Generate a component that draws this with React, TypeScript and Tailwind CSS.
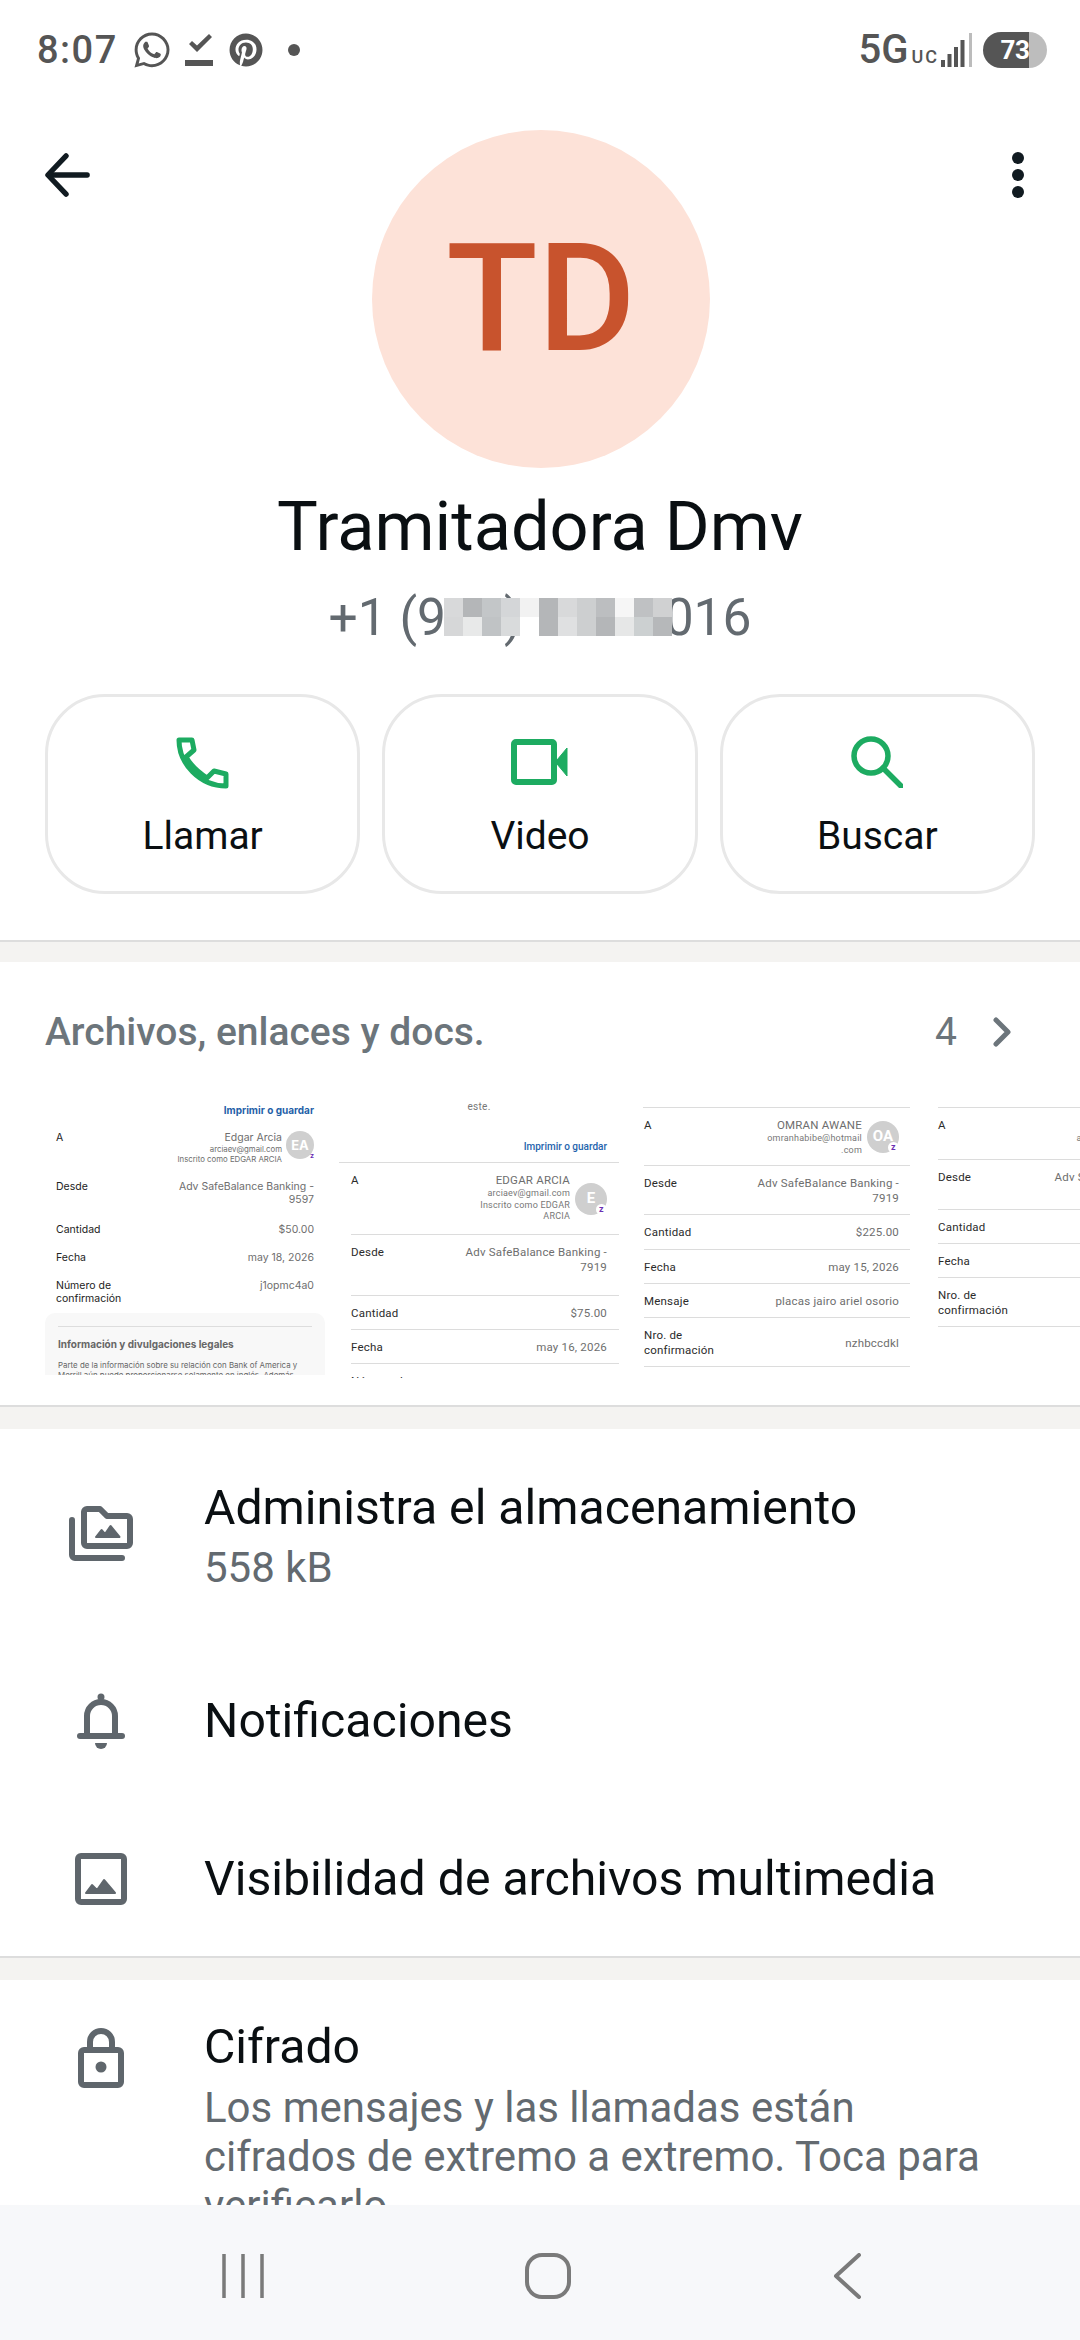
import React from 'react';
import { FaWhatsapp, FaPinterest } from 'react-icons/fa';

type Row = { label?: string; value?: string; sub?: string[]; initials?: string; h: string; valuePt?: string };

const mosaic = [
  'bg-[#d8d9da]', 'bg-[#b4b6b8]', 'bg-[#c3c6c8]', 'bg-[#d4d6d8]', 'bg-[#f2f2f2]', 'bg-[#b4b6b8]',
  'bg-[#d8d9da]', 'bg-[#cdcfd0]', 'bg-[#bcbec0]', 'bg-[#f6f6f6]', 'bg-[#bfc1c3]', 'bg-[#d0d1d2]',
  'bg-[#d6d7d8]', 'bg-[#e8e9e9]', 'bg-[#c0c3c5]', 'bg-[#d9dbdc]', 'bg-[#ffffff]', 'bg-[#b4b6b8]',
  'bg-[#dfe0e1]', 'bg-[#cdcfd0]', 'bg-[#b4b6b8]', 'bg-[#e6e7e7]', 'bg-[#ccd0d1]', 'bg-[#b6b8ba]',
];

const thumb2: Row[] = [
  { label: 'A', value: 'EDGAR ARCIA', sub: ['arciaev@gmail.com', 'Inscrito como EDGAR', 'ARCIA'], initials: 'E', h: 'h-[72px]' },
  { label: 'Desde', value: 'Adv SafeBalance Banking - 7919', h: 'h-[61px]' },
  { label: 'Cantidad', value: '$75.00', h: 'h-[34px]' },
  { label: 'Fecha', value: 'may 16, 2026', h: 'h-[34px]' },
  { label: 'Número de', value: '', h: 'h-[34px]' },
];

const thumb3: Row[] = [
  { label: 'A', value: 'OMRAN AWANE', sub: ['omranhabibe@hotmail', '.com'], initials: 'OA', h: 'h-[58px]' },
  { label: 'Desde', value: 'Adv SafeBalance Banking - 7919', h: 'h-[49px]' },
  { label: 'Cantidad', value: '$225.00', h: 'h-[35px]' },
  { label: 'Fecha', value: 'may 15, 2026', h: 'h-[34px]' },
  { label: 'Mensaje', value: 'placas jairo ariel osorio', h: 'h-[34px]' },
  { label: 'Nro. de confirmación', value: 'nzhbccdkl', h: 'h-[49px]', valuePt: 'pt-[8px]' },
];

const thumb4: Row[] = [
  { label: 'A', value: 'EDGAR ARCIA', sub: ['arciaev@gmail.com'], initials: 'E', h: 'h-[52px]' },
  { label: 'Desde', value: 'Adv SafeBalance Banking - 7919', h: 'h-[50px]' },
  { label: 'Cantidad', value: '$50.00', h: 'h-[34px]' },
  { label: 'Fecha', value: 'may 18, 2026', h: 'h-[34px]' },
  { label: 'Nro. de confirmación', value: 'j1opmc4a0', h: 'h-[49px]' },
];

const MiniAvatar: React.FC<{ initials: string }> = ({ initials }) => (
  <div className="relative -mt-[10px] ml-[5px] flex h-[32px] w-[32px] shrink-0 items-center justify-center self-center rounded-full bg-[#cfcfcf] text-[15px] font-bold text-white">
    {initials}
    <span className="absolute bottom-[0px] right-[0px] flex h-[11px] w-[11px] items-center justify-center rounded-full bg-white text-[9px] font-bold leading-none text-[#6b2fb3]">z</span>
  </div>
);

const ReceiptRow: React.FC<{ row: Row; inset: string }> = ({ row, inset }) => (
  <div className={`flex justify-between border-b border-[#dcdcdc] pt-[10px] text-[11.5px] leading-[15px] tracking-[0.2px] ${inset} ${row.h}`}>
    <div className="w-[90px] shrink-0 text-[#2b2b2b]">{row.label}</div>
    <div className={`flex min-w-0 flex-1 justify-end ${row.valuePt ?? ''}`}>
      <div className="min-w-0 text-right text-[#6e6e6e]">
        <div>{row.value}</div>
        {row.sub?.map((s) => (
          <div key={s} className="text-[9px] leading-[11.5px] text-[#777]">{s}</div>
        ))}
      </div>
      {row.initials && <MiniAvatar initials={row.initials} />}
    </div>
  </div>
);

const MiniAvatarSmall: React.FC = () => (
  <div className="relative ml-[4px] flex h-[28px] w-[28px] shrink-0 items-center justify-center rounded-full bg-[#cfcfcf] text-[13px] font-bold text-white">
    EA
    <span className="absolute bottom-[0px] right-[0px] text-[7px] font-bold leading-none text-[#6b2fb3]">z</span>
  </div>
);

const FirstReceipt: React.FC = () => (
  <div className="h-[276px] w-[280px] shrink-0 overflow-hidden font-['Inter',sans-serif] text-[10.5px] leading-[13px]">
    <div className="pr-[11px] pt-[5px] text-right text-[10px] font-bold text-[#1f5fa8]">Imprimir o guardar</div>
    <div className="flex justify-between pl-[11px] pr-[11px] pt-[14px] text-[#6e6e6e]">
      <div className="text-[#222]">A</div>
      <div className="flex">
        <div className="text-right">
          <div>Edgar Arcia</div>
          <div className="text-[7.8px] leading-[10px]">arciaev@gmail.com</div>
          <div className="text-[7.8px] leading-[10px]">Inscrito como EDGAR ARCIA</div>
        </div>
        <MiniAvatarSmall />
      </div>
    </div>
    <div className="flex justify-between pl-[11px] pr-[11px] pt-[16px] text-[#6e6e6e]">
      <div className="text-[#222]">Desde</div>
      <div className="w-[146px] text-right">Adv SafeBalance Banking - 9597</div>
    </div>
    <div className="flex justify-between pl-[11px] pr-[11px] pt-[17px] text-[#6e6e6e]">
      <div className="text-[#222]">Cantidad</div>
      <div>$50.00</div>
    </div>
    <div className="flex justify-between pl-[11px] pr-[11px] pt-[15px] text-[#6e6e6e]">
      <div className="text-[#222]">Fecha</div>
      <div>may 18, 2026</div>
    </div>
    <div className="flex justify-between pl-[11px] pr-[11px] pt-[15px] text-[#6e6e6e]">
      <div className="w-[80px] text-[#222]">Número de confirmación</div>
      <div>j1opmc4a0</div>
    </div>
    <div className="mt-[8px] h-[70px] rounded-[10px] bg-[#f8f8f8] px-[13px] pt-[13px]">
      <div className="border-t border-[#dddddd] pt-[11px] text-[10px] font-bold text-[#666]">Información y divulgaciones legales</div>
      <div className="pt-[9px] text-[7.9px] leading-[10px] text-[#666]">Parte de la información sobre su relación con Bank of America y Merrill aún puede proporcionarse solamente en inglés. Además</div>
    </div>
  </div>
);

const SecondReceipt: React.FC = () => (
  <div className="h-[279px] w-[280px] shrink-0 overflow-hidden">
    <div className="pt-[1px] text-center text-[10px] leading-[14px] tracking-[0.3px] text-[#777]">este.</div>
    <div className="pr-[12px] pt-[26px] text-right text-[10px] font-medium leading-[14px] text-[#1f64ad]">Imprimir o guardar</div>
    <div className="mt-[8px] border-t border-[#dcdcdc]" />
    {thumb2.map((r) => <ReceiptRow key={r.label} row={r} inset="ml-[12px] pr-[12px]" />)}
  </div>
);

const ThirdReceipt: React.FC = () => (
  <div className="h-[276px] w-[280px] shrink-0 overflow-hidden pt-[8px]">
    <div className="ml-[10px] mr-[3px] border-t border-[#dcdcdc]" />
    {thumb3.map((r) => <ReceiptRow key={r.label} row={r} inset="ml-[11px] mr-[3px] pr-[11px]" />)}
  </div>
);

const FourthReceipt: React.FC = () => (
  <div className="h-[276px] w-[280px] shrink-0 overflow-hidden pt-[8px]">
    <div className="ml-[11px] border-t border-[#dcdcdc]" />
    {thumb4.map((r) => <ReceiptRow key={r.label} row={r} inset="ml-[11px] pr-[11px]" />)}
  </div>
);

const StatusBar: React.FC = () => (
  <div className="flex h-[100px] items-center justify-between pl-[37px] pr-[33px] text-[#555555]">
    <div className="flex items-center">
      <span className="text-[38px] font-medium leading-none tracking-[1.5px]">8:07</span>
      <FaWhatsapp className="ml-[14px] h-[40px] w-[40px]" />
      <svg viewBox="0 0 28 34" className="ml-[13px] h-[34px] w-[28px]" fill="currentColor">
        <path d="M4 11l3-3 5 4.500L24 1l3 3L12 19z" />
        <rect x="0" y="27" width="28" height="6" />
      </svg>
      <FaPinterest className="ml-[16px] h-[34px] w-[34px]" />
      <span className="ml-[25px] h-[12px] w-[12px] rounded-full bg-[#555555]" />
    </div>
    <div className="flex items-center">
      <span className="text-[40px] font-medium leading-none">5G</span>
      <span className="ml-[3px] mt-[14px] text-[18px] font-medium leading-none tracking-[2px]">UC</span>
      <svg viewBox="0 0 32 34" className="ml-[2px] h-[34px] w-[32px]" fill="currentColor">
        <rect x="0" y="27" width="4" height="7" />
        <rect x="6.500" y="21" width="4" height="13" />
        <rect x="13" y="14" width="4" height="20" />
        <rect x="19.500" y="7" width="4" height="27" />
        <rect x="28" y="0" width="3" height="34" fill="#bcbcbc" />
      </svg>
      <div className="ml-[10px] flex h-[36px] w-[64px] items-center justify-center rounded-full bg-[linear-gradient(90deg,#555555_0%,#555555_72%,#bdbdbd_72%)] text-[26px] font-bold leading-none tracking-[-0.5px] text-white">73</div>
    </div>
  </div>
);

const ActionButton: React.FC<{ label: string; children: React.ReactNode }> = ({ label, children }) => (
  <div className="flex h-[200px] flex-1 flex-col items-center rounded-[60px] border-[3px] border-[#e8e8e8] pt-[37px]">
    <div className="flex h-[56px] items-center justify-center text-[#1dab61]">{children}</div>
    <div className="pt-[22px] text-[39px] leading-[48px] text-[#0a0f12]">{label}</div>
  </div>
);

const FolderIcon = () => (
  <svg viewBox="0 0 64 56" className="mt-[27px] h-[56px] w-[64px]" fill="none" stroke="#5f666c" strokeWidth="6" strokeLinecap="round" strokeLinejoin="round">
    <path d="M3 15v35a3 3 0 0 0 3 3h47" />
    <path d="M15 7a3 3 0 0 1 3-3h13l7 7h20a3 3 0 0 1 3 3v24a3 3 0 0 1-3 3H18a3 3 0 0 1-3-3z" />
    <path d="M27 32l5.500-7 3.500 4 5.500-8 9 11z" fill="#5f666c" stroke="#5f666c" strokeWidth="2" />
  </svg>
);

const BellIcon = () => (
  <svg viewBox="0 0 48 60" className="h-[60px] w-[48px]" fill="none" stroke="#5f666c" strokeWidth="6" strokeLinecap="round" strokeLinejoin="round">
    <path d="M10 44V25a14 14 0 0 1 28 0v19" />
    <path d="M3 45h42" />
    <circle cx="24" cy="6" r="2" fill="#5f666c" strokeWidth="3" />
    <path d="M18 52h12a6 6 0 0 1-12 0z" fill="#5f666c" stroke="none" />
  </svg>
);

const ImageIcon = () => (
  <svg viewBox="0 0 52 52" className="mt-[4px] h-[52px] w-[52px]" fill="none" stroke="#5f666c" strokeWidth="6" strokeLinejoin="round">
    <rect x="3" y="3" width="46" height="46" rx="3" />
    <path d="M11 40l6-8 5 5 7-10 11 13z" fill="#5f666c" stroke="#5f666c" strokeWidth="2" />
  </svg>
);

const LockIcon = () => (
  <svg viewBox="0 0 46 60" className="mt-[11px] h-[60px] w-[46px]" fill="none" stroke="#5f666c" strokeWidth="6" strokeLinejoin="round">
    <path d="M12 22V14a11 11 0 0 1 22 0v8" />
    <rect x="3" y="22" width="40" height="35" rx="3" />
    <circle cx="23" cy="39" r="5.500" fill="#5f666c" stroke="none" />
  </svg>
);

const ListRow: React.FC<{ icon: React.ReactNode; title: string; className: string; children?: React.ReactNode }> = ({ icon, title, className, children }) => (
  <div className={`flex ${className}`}>
    <div className="flex w-[204px] shrink-0 justify-center pr-[2px]">{icon}</div>
    <div className="min-w-0 flex-1 pr-[80px]">
      <div className="whitespace-nowrap text-[48.2px] leading-[60px] text-[#0a0f12]">{title}</div>
      {children}
    </div>
  </div>
);

const App: React.FC = () => (
  <div className="flex h-[2340px] w-[1080px] flex-col overflow-hidden bg-white font-['Roboto',sans-serif]">
    <div className="min-h-0 flex-1 overflow-hidden">
      <StatusBar />

      {/* Top bar + avatar */}
      <div className="flex items-start justify-between pl-[45px] pr-[56px] pt-[30px]">
        <div className="w-[61px] pt-[22px]">
          <svg viewBox="0 0 48 48" className="h-[46px] w-[46px]" fill="none" stroke="#111b21" strokeWidth="5.500" strokeLinecap="round" strokeLinejoin="round">
            <path d="M44 24H4" />
            <path d="M22 4L3 24l19 20" />
          </svg>
        </div>
        <div className="flex h-[338px] w-[338px] items-center justify-center rounded-full bg-[#fde2d8] text-[150px] font-medium leading-none text-[#c8532d]">TD</div>
        <div className="flex w-[48px] justify-end pt-[22px]">
          <div className="flex h-[46px] w-[12px] flex-col justify-between">
            <span className="h-[12px] w-[12px] rounded-full bg-[#111b21]" />
            <span className="h-[12px] w-[12px] rounded-full bg-[#111b21]" />
            <span className="h-[12px] w-[12px] rounded-full bg-[#111b21]" />
          </div>
        </div>
      </div>

      <div className="pt-[20px] text-center text-[68.5px] leading-[78px] text-[#0a0f12]">Tramitadora Dmv</div>
      <div className="flex justify-center pt-[22px]">
        <div className="relative text-[51.5px] leading-[60px] text-[#636a70]">
          +1 (9<span className="invisible">00</span>) <span className="invisible">000-0</span>016
          <div className="absolute left-[115px] top-[10px] grid h-[38px] w-[228px] grid-cols-12">
            {mosaic.map((c, i) => <div key={i} className={c} />)}
          </div>
        </div>
      </div>

      {/* Actions */}
      <div className="flex gap-[22px] pl-[45px] pr-[45px] pt-[46px]">
        <ActionButton label="Llamar">
          <svg viewBox="10 8 58 56" className="h-[56px] w-[58px]" fill="none" stroke="currentColor" strokeWidth="5" strokeLinejoin="round" strokeLinecap="round">
            <path d="M15 14h13l2 10-8 7C27 40 34 46 43 52l7-7 12 3v12C36 60 15 38 15 14z" />
          </svg>
        </ActionButton>
        <ActionButton label="Video">
          <svg viewBox="0 0 58 46" className="h-[46px] w-[58px]" fill="none" stroke="currentColor" strokeWidth="6" strokeLinejoin="round">
            <rect x="3" y="3" width="40" height="40" rx="2" />
            <path d="M56 9v28L46 25v-4z" fill="currentColor" strokeWidth="1" />
          </svg>
        </ActionButton>
        <ActionButton label="Buscar">
          <svg viewBox="0 0 52 52" className="h-[52px] w-[52px]" fill="none" stroke="currentColor" strokeWidth="5.500" strokeLinecap="round">
            <circle cx="20" cy="20" r="17" />
            <path d="M32 32l18 18" />
          </svg>
        </ActionButton>
      </div>

      <div className="mt-[46px] h-[22px] border-t-2 border-[#dddddd] bg-[#f4f3f1]" />

      {/* Media */}
      <div className="h-[445px] border-b-2 border-[#dddddd]">
        <div className="flex items-center justify-between pl-[45px] pr-[68px] pt-[47px]">
          <div className="text-[39px] font-medium leading-[46px] text-[#6c757b]">Archivos, enlaces y docs.</div>
          <div className="flex items-center">
            <span className="text-[39px] leading-[46px] text-[#6c757b]">4</span>
            <svg viewBox="0 0 20 30" className="ml-[35px] h-[30px] w-[20px]" fill="none" stroke="#6c757b" strokeWidth="5" strokeLinecap="round" strokeLinejoin="round">
              <path d="M4 3l12 12L4 27" />
            </svg>
          </div>
        </div>
        <div className="flex gap-[14px] overflow-hidden pl-[45px] pt-[44px]">
          <FirstReceipt />
          <SecondReceipt />
          <ThirdReceipt />
          <FourthReceipt />
        </div>
      </div>

      <div className="h-[22px] bg-[#f4f3f1]" />

      {/* Settings */}
      <div className="h-[529px] border-b-2 border-[#dddddd] pt-[43px]">
        <ListRow icon={<FolderIcon />} title="Administra el almacenamiento" className="h-[219px] pt-[6px]">
          <div className="pt-[2px] text-[42px] leading-[56px] text-[#636a70]">558 kB</div>
        </ListRow>
        <ListRow icon={<BellIcon />} title="Notificaciones" className="h-[158px]" />
        <ListRow icon={<ImageIcon />} title="Visibilidad de archivos multimedia" className="h-[100px]" />
      </div>

      <div className="h-[22px] bg-[#f4f3f1]" />

      <div className="pt-[37px]">
        <ListRow icon={<LockIcon />} title="Cifrado" className="">
          <div className="pt-[6px] text-[42px] leading-[49px] text-[#636a70]">Los mensajes y las llamadas están cifrados de extremo a extremo. Toca para verificarlo</div>
        </ListRow>
      </div>
    </div>

    {/* Nav bar */}
    <div className="flex h-[135px] shrink-0 items-center justify-between bg-[#f7f8fa] pl-[222px] pr-[218px] pt-[6px]">
      <svg viewBox="0 0 42 44" className="h-[44px] w-[42px]" fill="none" stroke="#7a7a7a" strokeWidth="3.500">
        <path d="M2 0v44M21 0v44M40 0v44" />
      </svg>
      <svg viewBox="0 0 46 46" className="h-[46px] w-[46px]" fill="none" stroke="#7a7a7a" strokeWidth="4">
        <rect x="2" y="2" width="42" height="42" rx="15" />
      </svg>
      <svg viewBox="0 0 30 46" className="h-[46px] w-[30px]" fill="none" stroke="#7a7a7a" strokeWidth="4" strokeLinecap="round" strokeLinejoin="round">
        <path d="M27 2L4 23l23 21" />
      </svg>
    </div>
  </div>
);

export default App;
